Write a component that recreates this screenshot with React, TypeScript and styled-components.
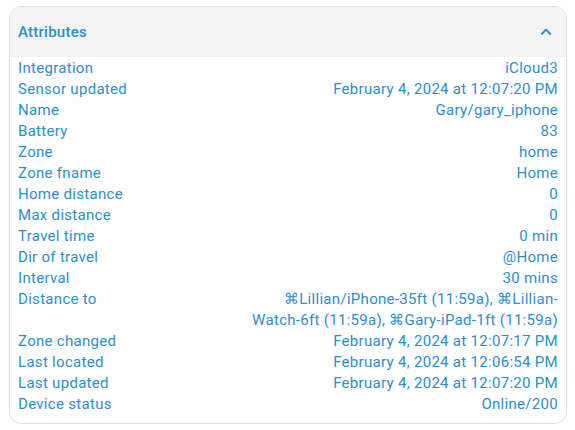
import React from 'react';
import styled, { createGlobalStyle } from 'styled-components';

const GlobalStyle = createGlobalStyle`
  body {
    margin: 0;
    background: #ffffff;
    font-family: Roboto, "Noto Sans", sans-serif;
  }
`;

const Card = styled.div`
  margin: 6px 8px 0 9px;
  width: 558px;
  box-sizing: border-box;
  border: 1px solid #e0e0e0;
  border-radius: 12px;
  overflow: hidden;
  background: #fff;
  color: #2b8fca;
`;

const Header = styled.div`
  display: flex;
  align-items: center;
  justify-content: space-between;
  height: 50px;
  padding: 0 9px 0 8px;
  background: #f3f3f3;
`;

const Title = styled.div`
  font-size: 15px;
  font-weight: 500;
  letter-spacing: 0.25px;
`;

const List = styled.div`
  display: flex;
  flex-direction: column;
  padding: 1px 8px 8px 8px;
`;

const Row = styled.div`
  display: flex;
  justify-content: space-between;
  align-items: flex-start;
  font-size: 15px;
  letter-spacing: 0.3px;
  line-height: 21px;
`;

const Key = styled.div`
  flex: 0 0 auto;
`;

const Value = styled.div`
  max-width: 315px;
  text-align: right;
`;

const attributes: [string, string][] = [
  ['Integration', 'iCloud3'],
  ['Sensor updated', 'February 4, 2024 at 12:07:20 PM'],
  ['Name', 'Gary/gary_iphone'],
  ['Battery', '83'],
  ['Zone', 'home'],
  ['Zone fname', 'Home'],
  ['Home distance', '0'],
  ['Max distance', '0'],
  ['Travel time', '0 min'],
  ['Dir of travel', '@Home'],
  ['Interval', '30 mins'],
  ['Distance to', '⌘Lillian/iPhone-35ft (11:59a), ⌘Lillian-Watch-6ft (11:59a), ⌘Gary-iPad-1ft (11:59a)'],
  ['Zone changed', 'February 4, 2024 at 12:07:17 PM'],
  ['Last located', 'February 4, 2024 at 12:06:54 PM'],
  ['Last updated', 'February 4, 2024 at 12:07:20 PM'],
  ['Device status', 'Online/200'],
];

const ChevronUp = () => (
  <svg width="22" height="22" viewBox="0 0 24 24" fill="currentColor">
    <path d="M7.41,15.41L12,10.83L16.59,15.41L18,14L12,8L6,14L7.41,15.41Z" />
  </svg>
);

export default function App() {
  return (
    <>
      <GlobalStyle />
      <Card>
        <Header>
          <Title>Attributes</Title>
          <ChevronUp />
        </Header>
        <List>
          {attributes.map(([k, v]) => (
            <Row key={k}>
              <Key>{k}</Key>
              <Value>{v}</Value>
            </Row>
          ))}
        </List>
      </Card>
    </>
  );
}
